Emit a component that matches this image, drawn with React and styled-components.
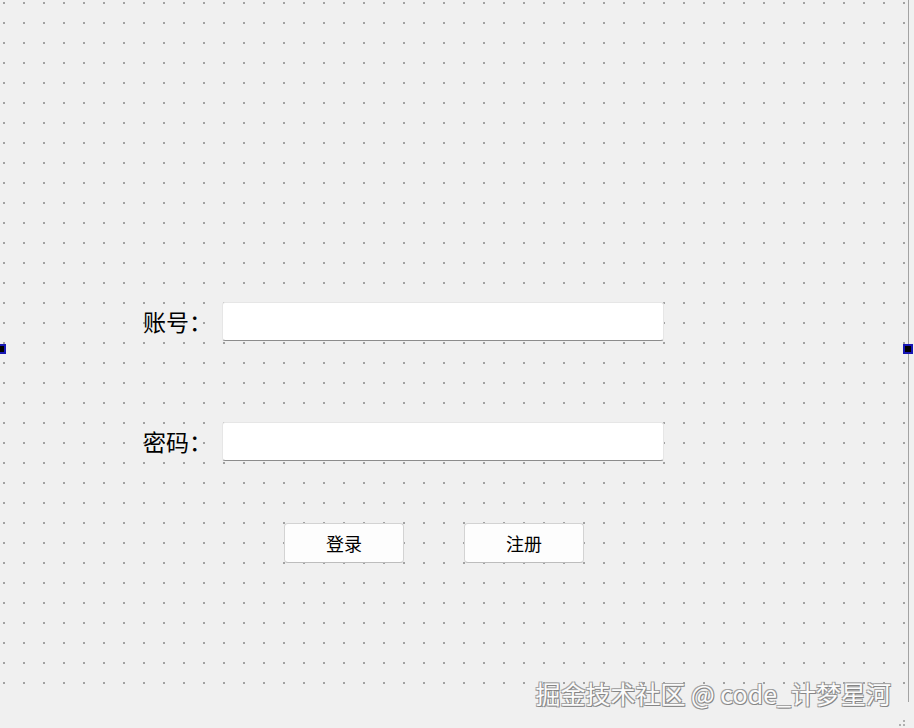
import styled, { createGlobalStyle } from "styled-components";

const GlobalStyle = createGlobalStyle`
  html, body {
    margin: 0;
    padding: 0;
    background: #f0f0f0;
  }
  body {
    font-family: "Noto Sans CJK SC", "Noto Sans", "Liberation Sans", sans-serif;
  }
`;

const Page = styled.div`
  position: relative;
  width: 914px;
  height: 728px;
  overflow: hidden;
  background: #f0f0f0;
  display: flex;
  flex-direction: column;
`;

const Canvas = styled.div`
  box-sizing: border-box;
  width: 909px;
  height: 702px;
  border-right: 1px solid #a3a3a3;
  padding: 302px 0 0 143px;
  background-color: #a2a2a2;
  background-image:
    linear-gradient(90deg, transparent 0 2px, #f0f0f0 2px),
    linear-gradient(180deg, transparent 0 2px, #f0f0f0 2px);
  background-size: 20px 20px;
  background-position: 3px 2px;
  display: flex;
  flex-direction: column;
`;

const Field = styled.div`
  display: flex;
  align-items: center;
  height: 39px;
  margin-bottom: ${(props) => props.gap}px;
`;

const Label = styled.label`
  width: 79px;
  font-size: 23px;
  color: #000;
  white-space: nowrap;
  line-height: 1;
`;

const Input = styled.input`
  box-sizing: border-box;
  width: 442px;
  height: 39px;
  background: #fff;
  border: 1px solid #e6e6e6;
  border-bottom: 1px solid #8c8c8c;
  border-radius: 3px;
  outline: none;
  padding: 0 8px;
  font-size: 16px;
`;

const Buttons = styled.div`
  display: flex;
  gap: 60px;
  padding-left: 141px;
`;

const Button = styled.button`
  box-sizing: border-box;
  width: 120px;
  height: 40px;
  background: #fdfdfd;
  border: 1px solid #d3d3d3;
  border-bottom-color: #bdbdbd;
  border-radius: 4px;
  font-family: inherit;
  font-size: 18px;
  color: #000;
  padding: 0;
`;

const Footer = styled.div`
  flex: 1;
  display: flex;
  justify-content: flex-end;
  align-items: flex-end;
  padding: 0 9px 2px 0;
`;

const Grip = styled.svg`
  display: block;
`;

const Handle = styled.div`
  position: absolute;
  top: 344px;
  left: ${(props) => props.x}px;
  box-sizing: border-box;
  width: 10px;
  height: 10px;
  background: #000;
  border: 2px solid #1616b4;
`;

const Watermark = styled.div`
  position: absolute;
  right: 23px;
  top: 675px;
  font-size: 25px;
  color: #fbfbfb;
  white-space: nowrap;
  text-shadow:
    1px 1px 0 #858585,
    -1px -1px 0 #a5a5a5,
    1px -1px 0 #9a9a9a,
    -1px 1px 0 #9a9a9a;
`;

const App = () => {
  return (
    <>
      <GlobalStyle />
      <Page>
        <Canvas>
          <Field gap={81}>
            <Label>账号：</Label>
            <Input />
          </Field>
          <Field gap={62}>
            <Label>密码：</Label>
            <Input type="password" />
          </Field>
          <Buttons>
            <Button>登录</Button>
            <Button>注册</Button>
          </Buttons>
        </Canvas>
        <Footer>
          <Grip width="6" height="6" viewBox="0 0 6 6">
            <rect x="4" y="0" width="2" height="2" fill="#b0b0b0" />
            <rect x="0" y="4" width="2" height="2" fill="#b0b0b0" />
            <rect x="4" y="4" width="2" height="2" fill="#b0b0b0" />
          </Grip>
        </Footer>
        <Handle x={-4} />
        <Handle x={903} />
        <Watermark>掘金技术社区 @ code_计梦星河</Watermark>
      </Page>
    </>
  );
};

export default App;
